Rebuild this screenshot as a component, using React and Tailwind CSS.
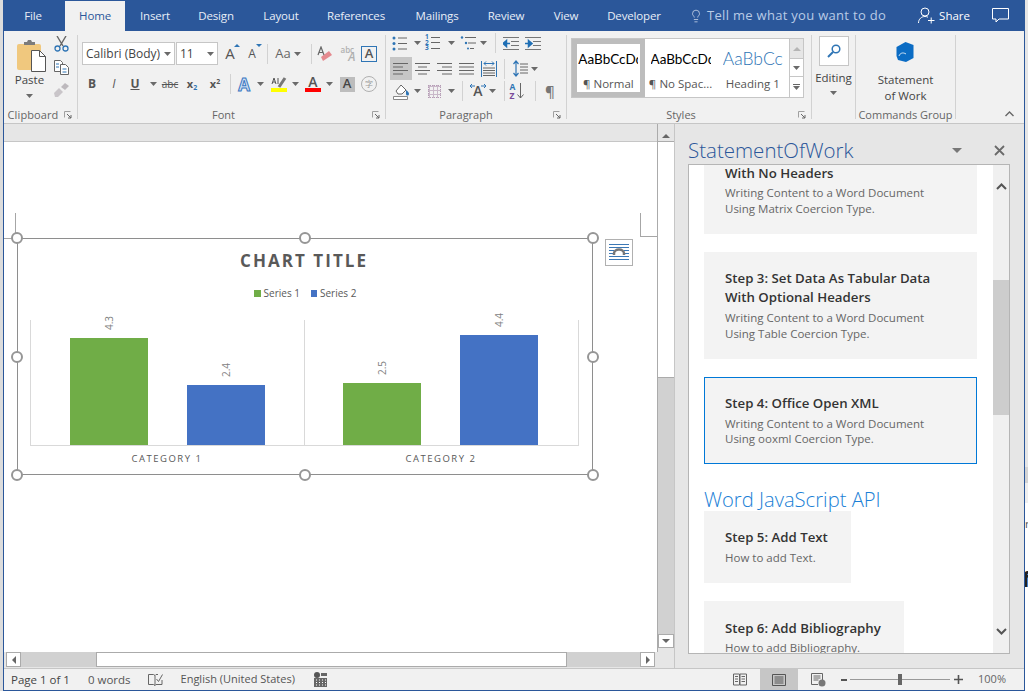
import { Lightbulb } from "lucide-react";

const tabClass = "flex items-center justify-center text-[11.5px] tracking-[-0.15px] text-[#e8eef7]";
const labelClass = "relative flex items-center justify-center h-[14px] -mb-[3px] text-[11px] text-[#666]";

function Caret({ className = "" }) {
  return (
    <svg width="7" height="4" viewBox="0 0 7 4" className={`shrink-0 ${className}`}>
      <path d="M0 0h7L3.5 4z" fill="#6a6a6a" />
    </svg>
  );
}

function Launcher() {
  return (
    <svg width="8" height="8" viewBox="0 0 8 8">
      <path d="M.5.5h6M.5.5v6" stroke="#a0a0a0" fill="none" />
      <path d="M3 3l4 4M4 7h3V4" stroke="#666" fill="none" />
    </svg>
  );
}

function Sep({ className = "" }) {
  return <div className={`w-px bg-[#d2d2d2] ${className}`} />;
}

function Cell({ className = "", children }) {
  return <div className={`flex items-center justify-center h-full ${className}`}>{children}</div>;
}

function Lines({ rows, className = "" }) {
  // rows of [x1, x2] at even spacing, for the paragraph icons
  return (
    <svg width="16" height="14" viewBox="0 0 16 14" className={className}>
      {rows.map((r, i) => (
        <path key={i} d={`M${r[0]} ${1.5 + i * 3.5}H${r[1]}`} stroke="#666" />
      ))}
    </svg>
  );
}

function Bullets() {
  return (
    <svg width="16" height="15" viewBox="0 0 16 15">
      {[2, 7.5, 13].map((y) => (
        <g key={y}>
          <circle cx="2" cy={y} r="1.5" fill="#2f75b5" />
          <path d={`M6 ${y}H15`} stroke="#666" />
        </g>
      ))}
    </svg>
  );
}

function Numbered() {
  return (
    <div className="relative w-[16px] h-[16px]">
      {["1", "2", "3"].map((n) => (
        <div key={n} className="flex items-center h-[5.3px] text-[6.5px] font-bold leading-none text-[#2f75b5]">
          <span className="w-[6px]">{n}</span>
          <span className="h-px w-[9px] bg-[#666]" />
        </div>
      ))}
    </div>
  );
}

function Multilevel() {
  return (
    <svg width="17" height="16" viewBox="0 0 17 16">
      <path d="M5 2.5h11M8 8h8M10 13.5h4" stroke="#666" />
      <circle cx="2" cy="2.5" r="1.2" fill="#2f75b5" />
      <circle cx="6" cy="8" r="1.2" fill="#2f75b5" />
      <circle cx="8" cy="13.5" r="1" fill="#2f75b5" />
    </svg>
  );
}

function Indent({ flip }) {
  return (
    <svg width="16" height="13" viewBox="0 0 16 13">
      <path d="M0 .5h16M8 4.5h8M8 8.5h8M0 12.5h16" stroke="#777" />
      {flip ? (
        <path d="M0 6.5h5M3.5 3.5L7 6.5l-3.5 3z" stroke="#1f6fb5" strokeWidth="1.5" fill="#1f6fb5" />
      ) : (
        <path d="M7 6.5H2M3.5 3.5L0 6.5l3.5 3z" stroke="#1f6fb5" strokeWidth="1.5" fill="#1f6fb5" />
      )}
    </svg>
  );
}

export default function App() {
  return (
    <div className="relative flex w-[1028px] h-[693px] overflow-hidden bg-white font-['Open_Sans',sans-serif]">
      <div className="w-[3px] h-[691px] shrink-0 bg-[#dcdcdc]" />
      <div className="flex flex-col w-[1022px] h-[691px] shrink-0 border-x border-b border-[#2b579a] bg-[#f1f1f1]">
        {/* tabs */}
        <div className="flex h-[31px] bg-[#2b579a] shrink-0">
          <div className={`${tabClass} w-[61px] pr-[3px]`}>File</div>
          <div className="flex items-center justify-center mt-px w-[60px] bg-[#f1f1f1] text-[11.5px] tracking-[-0.15px] text-[#2b579a]">Home</div>
          <div className={`${tabClass} w-[60px]`}>Insert</div>
          <div className={`${tabClass} w-[62px]`}>Design</div>
          <div className={`${tabClass} w-[68px]`}>Layout</div>
          <div className={`${tabClass} w-[82px]`}>References</div>
          <div className={`${tabClass} w-[80px]`}>Mailings</div>
          <div className={`${tabClass} w-[58px]`}>Review</div>
          <div className={`${tabClass} w-[62px]`}>View</div>
          <div className={`${tabClass} w-[74px]`}>Developer</div>
          <div className="flex items-center ml-[18px] text-[13px] tracking-[0.3px] text-[#b9cbe6]">
            <Lightbulb size={14} strokeWidth={1.2} className="text-[#dfe7f3] mr-[4px]" />
            Tell me what you want to do
          </div>
          <div className="flex items-center ml-auto text-[11.5px] text-white">
            <svg width="17" height="17" viewBox="0 0 17 17" className="mr-[4px]">
              <circle cx="7" cy="5" r="4" fill="none" stroke="#fff" />
              <path d="M.5 16c0-4 3-6.500 6.500-6.500 1 0 2 .2 3 .7M10 13.500h6.500M13.200 10.500v6" fill="none" stroke="#fff" />
            </svg>
            Share
            <svg width="17" height="15" viewBox="0 0 17 15" className="ml-[22px] mr-[15px]">
              <path d="M.5.500h16v10.500H7L4 14v-3H.5z" fill="none" stroke="#fff" />
            </svg>
          </div>
        </div>

        {/* ribbon */}
        <div className="relative flex h-[93px] shrink-0 border-b border-[#c6c6c6] text-[#444]">
          {/* clipboard */}
          <div className="flex flex-col w-[74px] my-[4px] border-r border-[#d2d2d2]">
            <div className="flex flex-1 pl-[13px]">
              <div className="flex flex-col items-center w-[29px] text-[11.5px]">
                <svg width="29" height="33" viewBox="0 0 29 33" className="mt-[4px]">
                  <rect x="0" y="5" width="24" height="26" rx="2" fill="#f0c87e" />
                  <path d="M7 6V3h3l1-2h3l1 2h3v3z" fill="#7b7b7b" />
                  <path d="M14.500 11.500h8l6 6v15h-14z" fill="#fff" stroke="#555" />
                  <path d="M22.500 11.500v6h6" fill="none" stroke="#555" />
                </svg>
                <span className="-ml-[4px] leading-[15px]">Paste</span>
                <Caret className="mt-[7px] -ml-[4px]" />
              </div>
              <div className="flex flex-col items-center w-[16px] ml-[7px] mt-[1px] gap-[8px]">
                <svg width="15" height="16" viewBox="0 0 15 16">
                  <path d="M3 0l6 10M12 0L6 10" stroke="#666" strokeWidth="1.400" />
                  <circle cx="3.500" cy="12.500" r="2.500" fill="none" stroke="#2f75b5" strokeWidth="1.300" />
                  <circle cx="11.500" cy="12.500" r="2.500" fill="none" stroke="#2f75b5" strokeWidth="1.300" />
                </svg>
                <svg width="15" height="15" viewBox="0 0 15 15">
                  <path d="M.5.500h6l2 2v9h-8z" fill="#fff" stroke="#666" />
                  <path d="M6.500 4.500h5l3 3v7h-8z" fill="#fff" stroke="#666" />
                  <path d="M2 4h3M2 7h3M8.500 9h4M8.500 12h4" stroke="#2f75b5" />
                </svg>
                <svg width="16" height="14" viewBox="0 0 16 14">
                  <path d="M1 10l5-5 4 4-5 5H2z" fill="#c9c5c9" />
                  <path d="M8 4l4-4 4 3-4 4z" fill="#bdb9bd" />
                </svg>
              </div>
            </div>
            <div className={`${labelClass} pr-[1px]`}>
              <span className="tracking-[0.1px]">Clipboard</span>
              <span className="flex ml-[6px]"><Launcher /></span>
            </div>
          </div>

          {/* font */}
          <div className="flex flex-col w-[308px] my-[4px] border-r border-[#d2d2d2]">
            <div className="flex-1 pl-[3px]">
              <div className="flex h-[23px] mt-[7px] ml-px">
                <div className="flex items-center justify-between w-[93px] pl-[3px] pr-[3px] mr-px border border-[#c6c6c6] bg-white text-[12px] text-[#444]">
                  Calibri (Body)<Caret />
                </div>
                <div className="flex items-center justify-between w-[42px] pl-[3px] pr-[3px] border border-[#c6c6c6] bg-white text-[12px] text-[#444]">
                  11<Caret />
                </div>
                <Cell className="w-[22px] ml-px relative">
                  <span className="text-[15px] text-[#555]">A</span>
                  <span className="absolute right-[1px] top-[2px] w-0 h-0 border-x-[3px] border-b-[3px] border-x-transparent border-b-[#2f75b5]" />
                </Cell>
                <Cell className="w-[22px] relative">
                  <span className="text-[12px] text-[#555]">A</span>
                  <span className="absolute right-[1px] top-[2px] w-0 h-0 border-x-[3px] border-t-[3px] border-x-transparent border-t-[#2f75b5]" />
                </Cell>
                <Cell className="w-[8px]"><Sep className="h-[20px]" /></Cell>
                <Cell className="w-[24px]"><span className="text-[13px] text-[#666]">Aa</span></Cell>
                <Cell className="w-[4px]"><Caret /></Cell>
                <Cell className="w-[20px]"><Sep className="h-[20px] ml-[4px]" /></Cell>
                <Cell className="w-[12px]">
                  <svg width="16" height="16" viewBox="0 0 16 16" className="shrink-0">
                    <path d="M6 15l9-6-3-4-8 6z" fill="#e58a8f" />
                    <path d="M1 9l3-8 3 8M2.200 6.500h3.600" fill="none" stroke="#666" strokeWidth="1.200" />
                  </svg>
                </Cell>
                <Cell className="w-[30px]">
                  <div className="relative w-[15px] h-[18px] ml-[4px] text-[#b0b0b0] font-semibold">
                    <span className="absolute top-[-1px] left-0 text-[8px]">abc</span>
                    <span className="absolute bottom-[-3px] right-0 text-[12px] italic">A</span>
                  </div>
                </Cell>
                <Cell className="w-[16px]">
                  <div className="flex items-center justify-center w-[16px] h-[16px] border border-[#2f75b5] text-[13px] font-semibold text-[#555]">A</div>
                </Cell>
              </div>
              <div className="flex h-[22px] mt-[8px] text-[#555] font-bold">
                <Cell className="w-[22px]"><span className="text-[12px]">B</span></Cell>
                <Cell className="w-[22px]"><span className="text-[12px] italic font-normal">I</span></Cell>
                <Cell className="w-[20px]"><span className="text-[12px] underline">U</span></Cell>
                <Cell className="w-[16px]"><Caret /></Cell>
                <Cell className="w-[18px]"><span className="text-[10px] font-normal line-through">abc</span></Cell>
                <Cell className="w-[26px]"><span className="text-[11px]">x<sub className="text-[7px] text-[#2f75b5]">2</sub></span></Cell>
                <Cell className="w-[20px]"><span className="text-[11px]">x<sup className="text-[7px]">2</sup></span></Cell>
                <Cell className="w-[10px]"><Sep className="h-[20px]" /></Cell>
                <Cell className="w-[18px]"><span className="text-[17px] leading-none text-[#cfe0f3] [-webkit-text-stroke:1px_#3b78c2]">A</span></Cell>
                <Cell className="w-[14px]"><Caret /></Cell>
                <Cell className="w-[24px]">
                  <div className="flex flex-col items-center">
                    <svg width="16" height="12" viewBox="0 0 16 12">
                      <path d="M8 11L14 2" stroke="#777" strokeWidth="3" />
                      <path d="M1 8l2-6 2 6M2 6h2M7 2v6" fill="none" stroke="#555" />
                    </svg>
                    <span className="w-[16px] h-[4px] bg-[#ffff00]" />
                  </div>
                </Cell>
                <Cell className="w-[8px]"><Caret /></Cell>
                <Cell className="w-[28px]">
                  <div className="flex flex-col items-center">
                    <span className="text-[14px] leading-[12px] font-semibold text-[#555]">A</span>
                    <span className="w-[16px] h-[4px] bg-[#ff0000]" />
                  </div>
                </Cell>
                <Cell className="w-[4px]"><Caret /></Cell>
                <Cell className="w-[32px]">
                  <div className="flex items-center justify-center w-[15px] h-[15px] bg-[#bdbdbd] text-[13px] font-semibold text-[#444]">A</div>
                </Cell>
                <Cell className="w-[12px]">
                  <div className="flex items-center justify-center shrink-0 w-[16px] h-[16px] rounded-full border border-[#b0b0b0] text-[8px] font-normal text-[#9a9a9a] font-['Noto_Sans_CJK_SC',sans-serif]">字</div>
                </Cell>
              </div>
            </div>
            <div className={`${labelClass} pr-[16px]`}>
              Font
              <span className="absolute right-[5px] top-[3px] flex"><Launcher /></span>
            </div>
          </div>

          {/* paragraph */}
          <div className="flex flex-col w-[181px] my-[4px] border-r border-[#d2d2d2]">
            <div className="flex-1 pl-[3px]">
              <div className="flex h-[20px] mt-[-2px]">
                <Cell className="w-[22px]"><Bullets /></Cell>
                <Cell className="w-[12px]"><Caret /></Cell>
                <Cell className="w-[20px]"><Numbered /></Cell>
                <Cell className="w-[16px]"><Caret /></Cell>
                <Cell className="w-[18px]"><Multilevel /></Cell>
                <Cell className="w-[12px]"><Caret /></Cell>
                <Cell className="w-[12px]"><Sep className="h-[20px]" /></Cell>
                <Cell className="w-[20px]"><Indent /></Cell>
                <Cell className="w-[24px]"><Indent flip /></Cell>
              </div>
              <div className="flex h-[23px] mt-[4px]">
                <Cell className="w-[22px] ml-px bg-[#c6c6c6]"><Lines rows={[[0, 15], [0, 10], [0, 15], [0, 10]]} /></Cell>
                <Cell className="w-[22px]"><Lines rows={[[0, 15], [3, 12], [0, 15], [3, 12]]} /></Cell>
                <Cell className="w-[22px]"><Lines rows={[[0, 15], [5, 15], [0, 15], [5, 15]]} /></Cell>
                <Cell className="w-[22px]"><Lines rows={[[0, 15], [0, 15], [0, 15], [0, 15]]} /></Cell>
                <Cell className="w-[22px]">
                  <svg width="16" height="16" viewBox="0 0 16 16">
                    <path d="M.5 0v16M15.500 0v16" stroke="#2f75b5" />
                    <path d="M3 2.500h10M5 .5L3 2.500l2 2M11 .5l2 2-2 2" stroke="#2f75b5" fill="none" />
                    <path d="M2 7h12M2 9.500h12M2 12h12M2 14.500h12" stroke="#666" />
                  </svg>
                </Cell>
                <Cell className="w-[8px]"><Sep className="h-[20px]" /></Cell>
                <Cell className="w-[24px]">
                  <svg width="15" height="17" viewBox="0 0 15 17">
                    <path d="M3 1v15M.5 4L3 1l2.500 3M.5 13L3 16l2.500-3" stroke="#2f75b5" fill="none" strokeWidth="1.200" />
                    <path d="M7 4h8M7 7h8M7 10h8M7 13h8" stroke="#666" />
                  </svg>
                </Cell>
                <Cell className="w-[4px]"><Caret /></Cell>
              </div>
              <div className="flex h-[22px]">
                <Cell className="w-[24px]">
                  <svg width="17" height="17" viewBox="0 0 17 17">
                    <path d="M3 8l5-6 5 5-4 4H5z" fill="#fff" stroke="#666" />
                    <path d="M13 7c2 1 3 3 3 4a1.500 1.500 0 01-3 0z" fill="#2f75b5" />
                    <path d="M.5 13.500h14v3H.5z" fill="#fff" stroke="#888" />
                  </svg>
                </Cell>
                <Cell className="w-[8px]"><Caret /></Cell>
                <Cell className="w-[26px]">
                  <div className="w-[13px] h-[13px] border border-dotted border-[#b49ab4] [background-image:linear-gradient(#c9b8c9_1px,transparent_1px),linear-gradient(90deg,#c9b8c9_1px,transparent_1px)] [background-size:4px_4px]" />
                </Cell>
                <Cell className="w-[8px]"><Caret /></Cell>
                <Cell className="w-[14px]"><Sep className="h-[20px]" /></Cell>
                <Cell className="w-[18px]">
                  <div className="relative flex justify-center">
                    <span className="text-[14px] font-semibold leading-none text-[#555]">A</span>
                    <svg width="18" height="6" viewBox="0 0 18 6" className="absolute top-[-1px] left-1/2 -translate-x-1/2">
                      <path d="M1 3h5M12 3h5M3 1L1 3l2 2M15 1l2 2-2 2" stroke="#2f75b5" fill="none" />
                    </svg>
                  </div>
                </Cell>
                <Cell className="w-[10px]"><Caret /></Cell>
                <Cell className="w-[14px]"><Sep className="h-[20px]" /></Cell>
                <Cell className="w-[12px]">
                  <div className="flex items-center shrink-0">
                    <div className="flex flex-col text-[8.5px] font-bold leading-[9px]">
                      <span className="text-[#2f75b5]">A</span>
                      <span className="text-[#7a4b9a]">Z</span>
                    </div>
                    <svg width="7" height="16" viewBox="0 0 7 16" className="ml-[2px]">
                      <path d="M3.500 0v15M.5 11.500l3 3.500 3-3.500" stroke="#666" fill="none" />
                    </svg>
                  </div>
                </Cell>
                <Cell className="w-[24px]"><Sep className="h-[20px]" /></Cell>
                <Cell className="w-[6px]"><span className="text-[15px] font-semibold text-[#777]">¶</span></Cell>
              </div>
            </div>
            <div className={`${labelClass} pr-[20px]`}>
              Paragraph
              <span className="absolute right-[5px] top-[3px] flex"><Launcher /></span>
            </div>
          </div>

          {/* styles */}
          <div className="flex flex-col w-[245px] my-[4px] border-r border-[#d2d2d2]">
            <div className="flex flex-1 pl-[4px] pt-[3px]">
              <div className="flex w-[233px] h-[60px] border border-[#c6c6c6] bg-white">
                <div className="flex flex-col items-center w-[73px] border-[5px] border-[#bdbdbd] overflow-hidden">
                  <span className="w-[60px] overflow-hidden whitespace-nowrap font-['Lato',sans-serif] text-[13.5px] leading-[20px] mt-[5px] text-black">AaBbCcDd</span>
                  <span className="text-[11.5px] leading-[16px] mt-[7px] whitespace-nowrap text-[#555]">¶ Normal</span>
                </div>
                <div className="flex flex-col items-center w-[72px] pt-[10px] overflow-hidden">
                  <span className="w-[60px] overflow-hidden whitespace-nowrap font-['Lato',sans-serif] text-[13.5px] leading-[20px] text-black">AaBbCcDd</span>
                  <span className="text-[11.5px] leading-[16px] mt-[7px] whitespace-nowrap text-[#555]">¶ No Spac...</span>
                </div>
                <div className="flex flex-col items-center w-[73px] pt-[8px] overflow-hidden">
                  <span className="w-[60px] overflow-hidden whitespace-nowrap font-['Lato',sans-serif] text-[17.5px] leading-[24px] font-light text-[#2e74b5]">AaBbCcDd</span>
                  <span className="text-[11.5px] leading-[16px] mt-[5px] whitespace-nowrap text-[#555]">Heading 1</span>
                </div>
                <div className="flex flex-col w-[14px] border-l border-[#c6c6c6]">
                  <Cell className="!h-[19px] bg-[#e6e6e6]">
                    <span className="w-0 h-0 border-x-[4px] border-b-[4px] border-x-transparent border-b-[#b5b5b5]" />
                  </Cell>
                  <Cell className="!h-[19px] border-y border-[#c6c6c6]"><Caret /></Cell>
                  <Cell className="!h-[20px] flex-col gap-px">
                    <span className="w-[7px] h-px bg-[#666]" />
                    <Caret />
                  </Cell>
                </div>
              </div>
            </div>
            <div className={`${labelClass} pr-[16px]`}>
              Styles
              <span className="absolute right-[5px] top-[3px] flex"><Launcher /></span>
            </div>
          </div>

          {/* editing */}
          <div className="flex flex-col items-center w-[44px] my-[4px] border-r border-[#d2d2d2]">
            <div className="flex items-center justify-center w-[30px] h-[30px] mt-px border border-[#c6c6c6] bg-white">
              <svg width="14" height="14" viewBox="0 0 14 14">
                <circle cx="9" cy="5" r="3.800" fill="none" stroke="#2f75b5" strokeWidth="1.500" />
                <path d="M6 8l-5 5" stroke="#2f75b5" strokeWidth="2" />
              </svg>
            </div>
            <span className="mt-[4px] text-[11.5px] leading-[16px]">Editing</span>
            <Caret className="mt-[5px]" />
          </div>

          {/* commands */}
          <div className="flex flex-col items-center w-[100px] my-[4px] border-r border-[#d2d2d2]">
            <svg width="19" height="20" viewBox="0 0 19 20" className="mt-[7px]">
              <path d="M9.500 0L17.500 3v13l-7.500 4-8-2L.5 14V5z" fill="#0b6cc4" />
              <path d="M3 14c1-3 4-4 7-2" fill="none" stroke="#cfe3f5" strokeWidth="1" />
            </svg>
            <span className="mt-[10px] text-[11.500px] leading-[16px]">Statement</span>
            <span className="text-[11.500px] leading-[16px]">of Work</span>
            <span className="mt-auto -mb-[3px] h-[14px] flex items-center text-[11px] text-[#666] whitespace-nowrap">Commands Group</span>
          </div>

          <svg width="9" height="6" viewBox="0 0 9 6" className="absolute right-[10px] bottom-[6px]">
            <path d="M.5 5l4-4 4 4" fill="none" stroke="#666" strokeWidth="1.400" />
          </svg>
        </div>

        {/* body */}
        <div className="flex h-[544px] shrink-0 bg-[#e6e6e6]">
          <div className="flex flex-col w-[671px] shrink-0 border-r border-[#c6c6c6]">
            <div className="flex h-[528px]">
              {/* document */}
              <div className="flex-1 pt-[17px]">
                <div className="relative h-[511px] border-t border-[#c6c6c6] bg-white pl-[13px] pt-[96px]">
                  <span className="absolute left-[11px] top-[71px] h-[25px] w-px bg-[#a6a6a6]" />
                  <span className="absolute left-0 top-[96px] h-px w-[13px] bg-[#a6a6a6]" />
                  <span className="absolute left-[636px] top-[71px] h-[24px] w-px bg-[#a6a6a6]" />
                  <span className="absolute left-[636px] top-[94px] h-px w-[17px] bg-[#a6a6a6]" />

                  <div className="relative flex flex-col w-[576px] h-[237px] border border-[#8e8e8e] bg-white">
                    <Handle className="-left-[7px] -top-[7px]" />
                    <Handle className="left-1/2 -translate-x-1/2 -top-[7px]" />
                    <Handle className="-right-[7px] -top-[7px]" />
                    <Handle className="-left-[7px] top-1/2 -translate-y-1/2" />
                    <Handle className="-right-[7px] top-1/2 -translate-y-1/2" />
                    <Handle className="-left-[7px] -bottom-[7px]" />
                    <Handle className="left-1/2 -translate-x-1/2 -bottom-[7px]" />
                    <Handle className="-right-[7px] -bottom-[7px]" />

                    <div className="absolute left-[587px] top-0 flex items-center justify-center w-[28px] h-[27px] border border-[#b0b0b0] bg-white">
                      <svg width="20" height="17" viewBox="0 0 20 17">
                        <path d="M0 .5h20M0 3.500h20M0 6.500h5M15 6.500h5M0 9.500h4M16 9.500h4M0 12.500h20M0 15.500h20" stroke="#3c78b5" />
                        <path d="M5 11V9.500a5 4 0 0110 0V11" fill="none" stroke="#777" strokeWidth="2.500" />
                      </svg>
                    </div>

                    <div className="mt-[10px] pr-[2px] text-center text-[17px] leading-[24px] font-bold tracking-[0.12em] text-[#595959]">CHART TITLE</div>
                    <div className="flex justify-center items-center mt-[12px] h-[16px] text-[10px] text-[#595959]">
                      <span className="w-[7px] h-[7px] mr-[3px] bg-[#70ad47]" />
                      <span>Series 1</span>
                      <span className="w-[6px] h-[7px] ml-[11px] mr-[3px] bg-[#4472c4]" />
                      <span>Series 2</span>
                    </div>
                    <div className="flex mt-[19px] ml-[12px] w-[549px] h-[126px] border-b border-[#d9d9d9]">
                      <div className="flex items-end gap-[39px] w-[274px] pl-[39px] border-l border-[#d9d9d9]">
                        <Bar className="h-[107px] bg-[#70ad47]" label="4.3" />
                        <Bar className="h-[60px] bg-[#4472c4]" label="2.4" />
                      </div>
                      <div className="flex items-end gap-[39px] w-[275px] pl-[38px] border-x border-[#d9d9d9]">
                        <Bar className="h-[62px] bg-[#70ad47]" label="2.5" />
                        <Bar className="h-[110px] bg-[#4472c4]" label="4.4" />
                      </div>
                    </div>
                    <div className="flex mt-[6px] ml-[12px] text-[9.500px] leading-[14px] tracking-[0.16em] text-[#595959]">
                      <div className="w-[274px] text-center">CATEGORY 1</div>
                      <div className="w-[274px] text-center">CATEGORY 2</div>
                    </div>
                  </div>
                </div>
              </div>
              {/* vertical scrollbar */}
              <div className="flex flex-col w-[17px] border-l border-[#ababab]">
                <div className="flex items-center justify-center h-[17px] pt-[6px]">
                  <span className="w-0 h-0 border-x-[4px] border-b-[4px] border-x-transparent border-b-[#666]" />
                </div>
                <div className="h-[237px] border-y border-[#ababab] bg-white" />
                <div className="flex-1 bg-[#d1d1d1]" />
                <div className="flex items-center justify-center h-[14px] border border-[#ababab] bg-white">
                  <span className="w-0 h-0 border-x-[4px] border-t-[4px] border-x-transparent border-t-[#666]" />
                </div>
                <div className="h-[4px]" />
              </div>
            </div>
            {/* horizontal scrollbar */}
            <div className="flex h-[15px] ml-[2px] mr-[19px]">
              <div className="flex items-center justify-center w-[15px] border border-[#ababab] bg-white">
                <span className="w-0 h-0 border-y-[4px] border-r-[4px] border-y-transparent border-r-[#666]" />
              </div>
              <div className="w-[75px] bg-[#d1d1d1]" />
              <div className="w-[471px] border border-[#ababab] bg-white" />
              <div className="flex-1 bg-[#d1d1d1]" />
              <div className="flex items-center justify-center w-[15px] border border-[#ababab] bg-white">
                <span className="w-0 h-0 border-y-[4px] border-l-[4px] border-y-transparent border-l-[#666]" />
              </div>
            </div>
          </div>

          {/* task pane */}
          <div className="flex flex-col flex-1 pl-[13px]">
            <div className="flex items-center h-[40px] pr-[19px] pt-[12px]">
              <span className="text-[20.500px] leading-[26px] font-light text-[#2b579a]">StatementOfWork</span>
              <svg width="10" height="5" viewBox="0 0 10 5" className="ml-auto">
                <path d="M0 0h10L5 5z" fill="#777" />
              </svg>
              <svg width="11" height="11" viewBox="0 0 11 11" className="ml-[32px]">
                <path d="M1 1l9 9M10 1l-9 9" stroke="#6a6a6a" strokeWidth="1.800" />
              </svg>
            </div>
            <div className="flex w-[322px] h-[490px] border border-[#b5b5b5] bg-white">
              <div className="flex-1 pl-[15px] overflow-hidden">
                <Card className="w-[273px] px-[21px] pb-[17px]">
                  <div className="-mt-[1px]"><Title>With No Headers</Title></div>
                  <div className="-mt-[1px]"><Desc>Writing Content to a Word Document<br />Using Matrix Coercion Type.</Desc></div>
                </Card>
                <Card className="w-[273px] px-[21px] mt-[18px] py-[17px]">
                  <Title>Step 3: Set Data As Tabular Data<br />With Optional Headers</Title>
                  <Desc>Writing Content to a Word Document<br />Using Table Coercion Type.</Desc>
                </Card>
                <Card className="w-[273px] h-[87px] mt-[18px] pt-[16px] px-[20px] border border-[#0078d7]">
                  <Title>Step 4: Office Open XML</Title>
                  <Desc tight>Writing Content to a Word Document<br />Using ooxml Coercion Type.</Desc>
                </Card>
                <div className="h-[47px] pt-[20px] text-[20.200px] leading-[30px] font-light text-[#1b7fd6] whitespace-nowrap">Word JavaScript API</div>
                <Card className="w-[147px] px-[21px] py-[17px]">
                  <Title>Step 5: Add Text</Title>
                  <Desc>How to add Text.</Desc>
                </Card>
                <Card className="w-[200px] px-[21px] mt-[18px] pt-[18px] h-[52px] overflow-hidden">
                  <Title>Step 6: Add Bibliography</Title>
                  <div className="-mt-[1px]"><Desc>How to add Bibliography.</Desc></div>
                </Card>
              </div>
              <div className="flex flex-col items-center w-[16px] bg-[#f0f0f0]">
                <svg width="11" height="7" viewBox="0 0 11 7" className="mt-[18px]">
                  <path d="M1 6l4.500-4.500L10 6" fill="none" stroke="#555" strokeWidth="2" />
                </svg>
                <div className="w-full h-[135px] mt-[90px] bg-[#cdcdcd]" />
                <svg width="11" height="7" viewBox="0 0 11 7" className="mt-auto mb-[18px]">
                  <path d="M1 1l4.500 4.500L10 1" fill="none" stroke="#555" strokeWidth="2" />
                </svg>
              </div>
            </div>
          </div>
        </div>

        {/* status bar */}
        <div className="flex items-center flex-1 border-t border-[#c6c6c6] text-[11.5px] text-[#555]">
          <span className="ml-[7px] text-[#444]">Page 1 of 1</span>
          <span className="ml-[18px]">0 words</span>
          <svg width="15" height="13" viewBox="0 0 15 13" className="ml-[17px]">
            <path d="M.5 1.500h5l1.500 1v10L5.500 11.500h-5zM7 2.500l1-1h2M7 12.500l1-1h6V7" fill="none" stroke="#666" />
            <path d="M8.500 6l2 2.500 4-7" fill="none" stroke="#666" />
          </svg>
          <span className="ml-[18px] text-[11px]">English (United States)</span>
          <svg width="14" height="15" viewBox="0 0 14 15" className="ml-[18px]">
            <circle cx="4" cy="3" r="3" fill="#555" />
            <rect x="1" y="6" width="13" height="9" fill="#666" />
            <path d="M3 8h1M6 8h1M9 8h1M12 8h1M3 10.500h1M6 10.500h1M9 10.500h1M12 10.500h1M3 13h1M6 13h1M9 13h1M12 13h1" stroke="#fff" />
            <rect x="8" y="1" width="6" height="3" fill="#666" />
          </svg>
          <div className="flex items-center h-full ml-auto mr-[9px]">
            <svg width="14" height="13" viewBox="0 0 14 13">
              <path d="M.5 1h6v11h-6zM7 1h6.500v11H7z" fill="none" stroke="#666" />
              <path d="M2 3.500h3M2 6h3M2 8.500h3M8.500 3.500h3.500M8.500 6h3.500M8.500 8.500h3.500" stroke="#666" />
            </svg>
            <div className="flex items-center justify-center w-[38px] h-full ml-[13px] bg-[#c6c6c6]">
              <svg width="14" height="12" viewBox="0 0 14 12">
                <path d="M.5.500h13v11H.5z" fill="none" stroke="#555" />
                <path d="M2.500 3h9M2.500 5h9M2.500 7h9M2.500 9h9" stroke="#555" />
              </svg>
            </div>
            <svg width="15" height="14" viewBox="0 0 15 14" className="ml-[13px]">
              <path d="M.5.500h11V8M.5.500v11H7" fill="none" stroke="#666" />
              <path d="M2.500 3h7M2.500 5h7M2.500 7h5" stroke="#666" />
              <circle cx="11" cy="10" r="3.500" fill="#777" />
            </svg>
            <span className="w-[6px] h-[2px] ml-[15px] bg-[#555]" />
            <div className="relative w-[100px] h-px ml-[3px] bg-[#999]">
              <span className="absolute left-[48px] -top-[5px] w-[4px] h-[11px] bg-[#666]" />
            </div>
            <svg width="9" height="9" viewBox="0 0 9 9" className="ml-[4px]">
              <path d="M0 4.500h9M4.500 0v9" stroke="#555" strokeWidth="1.600" />
            </svg>
            <span className="w-[46px] ml-[6px] text-center text-[11px] text-[#666]">100%</span>
          </div>
        </div>
      </div>

      {/* what shows of the page behind the window */}
      <div className="flex flex-col w-[3px] min-w-0 h-[693px] overflow-hidden">
        <div className="h-[467px] shrink-0 bg-[#e6e6e6]" />
        <div className="h-[16px] shrink-0 bg-[#d4d4d4]" />
        <div className="h-[20px] shrink-0 bg-[#efefef]" />
        <div className="h-[15px] shrink-0 mt-[15px] text-[11px] leading-none text-[#555]">r</div>
        <div className="shrink-0 mt-[34px] -ml-[3px] text-[22px] leading-none font-bold text-[#222]">f</div>
      </div>
    </div>
  );
}

function Handle({ className }) {
  return <span className={`absolute w-[12px] h-[12px] rounded-full border-2 border-[#969696] bg-white ${className}`} />;
}

function Bar({ className, label }) {
  return (
    <div className={`relative w-[78px] ${className}`}>
      <span className="absolute left-1/2 bottom-full mb-[9px] -translate-x-1/2 -rotate-90 text-[10px] leading-[12px] text-[#7f7f7f]">{label}</span>
    </div>
  );
}

function Card({ className = "", children }) {
  return <div className={`bg-[#f3f3f3] ${className}`}>{children}</div>;
}

function Title({ children }) {
  return <div className="text-[13.250px] leading-[19px] font-semibold text-[#333] whitespace-nowrap">{children}</div>;
}

function Desc({ children, tight }) {
  return (
    <div className={`mt-[3px] text-[11.5px] text-[#666] whitespace-nowrap ${tight ? "leading-[15px]" : "leading-[16px]"}`}>
      {children}
    </div>
  );
}
